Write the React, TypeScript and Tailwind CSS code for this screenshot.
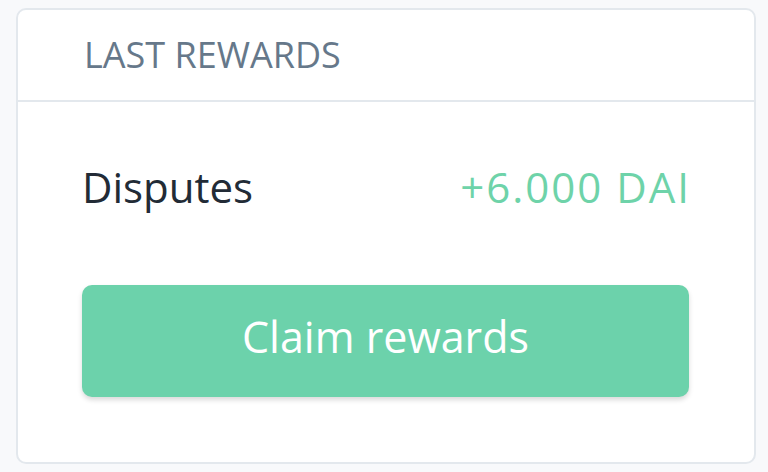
export default function App() {
  return (
    <div className="w-[768px] h-[472px] bg-[#f8f9fb] pl-4 pr-3 py-2" style={{ fontFamily: '"Open Sans", sans-serif' }}>
      <div className="h-[456px] bg-white border-2 border-[#e3e8ed] rounded-[10px] flex flex-col">
        <div className="h-[92px] flex items-center px-[66px] border-b-2 border-[#e3e8ed]">
          <span className="text-[36px] text-[#66788a] tracking-[0px] font-normal">LAST REWARDS</span>
        </div>
        <div className="flex-1 pl-[64px] pr-[65px] pt-[54px]">
          <div className="flex items-center justify-between h-[60px]">
            <span className="text-[42px] text-[#222b36]">Disputes</span>
            <span className="text-[42px] text-[#6ed3a9] tracking-[2px] -mr-[2px]">+6.000 DAI</span>
          </div>
          <button className="mt-[69px] w-full h-[112px] pb-[8px] rounded-[10px] bg-[#6cd2ab] text-white text-[43px] font-medium shadow-[0_3px_5px_rgba(0,0,0,0.15)]">
            Claim rewards
          </button>
        </div>
      </div>
    </div>
  );
}
